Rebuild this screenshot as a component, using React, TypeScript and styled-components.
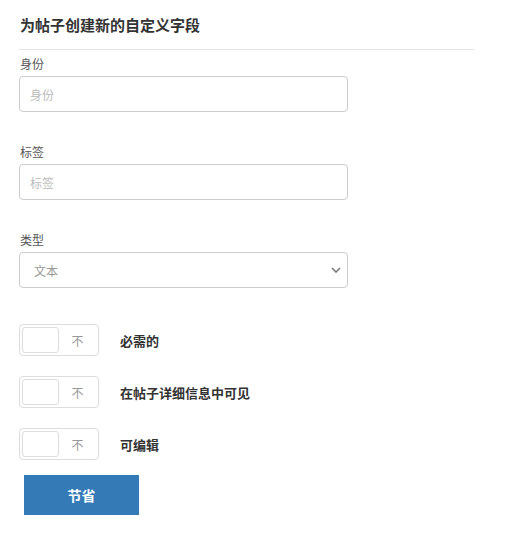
import React, { useState } from 'react';
import styled, { createGlobalStyle } from 'styled-components';

const GlobalStyle = createGlobalStyle`
  body {
    margin: 0;
    background: #fff;
    font-family: "Noto Sans CJK SC", "Noto Sans", "Liberation Sans", sans-serif;
    color: #333;
  }
`;

const Page = styled.div`
  width: 455px;
  padding: 15px 0 20px 19px;
`;

const Title = styled.h4`
  margin: 0;
  padding: 0 0 14px 1px;
  font-size: 15px;
  line-height: 20px;
  font-weight: bold;
  color: #333;
  border-bottom: 1px solid #e5e5e5;
`;

const Field = styled.div<{ first?: boolean }>`
  display: flex;
  flex-direction: column;
  margin-top: ${props => (props.first ? '6px' : '32px')};
`;

const Label = styled.label`
  font-size: 12px;
  line-height: 16px;
  color: #555;
  margin-bottom: 4px;
  padding-left: 1px;
`;

const Input = styled.input`
  box-sizing: border-box;
  width: 329px;
  height: 36px;
  padding: 0 10px;
  border: 1px solid #ccc;
  border-radius: 4px;
  font-family: inherit;
  font-size: 12px;
  color: #555;
  outline: none;

  &::placeholder {
    color: #bbb;
  }
`;

const SelectWrap = styled.div`
  position: relative;
  width: 329px;
`;

const Select = styled.select`
  box-sizing: border-box;
  width: 100%;
  height: 36px;
  padding: 0 14px;
  border: 1px solid #ccc;
  border-radius: 4px;
  background: #fff;
  font-family: inherit;
  font-size: 12px;
  color: #999;
  appearance: none;
  outline: none;
`;

const Chevron = styled.svg`
  position: absolute;
  right: 7px;
  top: 15px;
  pointer-events: none;
`;

const Toggles = styled.div`
  display: flex;
  flex-direction: column;
  gap: 20px;
  margin-top: 36px;
`;

const ToggleRow = styled.div`
  display: flex;
  align-items: center;
  gap: 21px;
`;

const Switch = styled.button`
  box-sizing: border-box;
  display: flex;
  align-items: center;
  width: 80px;
  height: 32px;
  padding: 2px;
  border: 1px solid #ddd;
  border-radius: 4px;
  background: #fff;
  cursor: pointer;
`;

const Knob = styled.span`
  box-sizing: border-box;
  width: 37px;
  height: 26px;
  border: 1px solid #ddd;
  border-radius: 3px;
  background: #fff;
`;

const SwitchText = styled.span`
  flex: 1;
  text-align: center;
  font-family: "Noto Sans CJK SC", sans-serif;
  font-size: 12px;
  color: #999;
`;

const ToggleLabel = styled.span`
  font-size: 13px;
  font-weight: bold;
  color: #333;
`;

const SaveButton = styled.button`
  margin: 15px 0 0 5px;
  width: 115px;
  height: 40px;
  border: none;
  background: #337ab7;
  color: #fff;
  font-family: inherit;
  font-size: 14px;
  font-weight: bold;
  cursor: pointer;
`;

const toggleItems = ['必需的', '在帖子详细信息中可见', '可编辑'];

const App: React.FC = () => {
  const [type, setType] = useState('text');

  return (
    <Page>
      <GlobalStyle />
      <Title>为帖子创建新的自定义字段</Title>

      <Field first>
        <Label>身份</Label>
        <Input type="text" placeholder="身份" />
      </Field>

      <Field>
        <Label>标签</Label>
        <Input type="text" placeholder="标签" />
      </Field>

      <Field>
        <Label>类型</Label>
        <SelectWrap>
          <Select value={type} onChange={e => setType(e.target.value)}>
            <option value="text">文本</option>
            <option value="number">数字</option>
          </Select>
          <Chevron width="10" height="6" viewBox="0 0 10 6">
            <path d="M1 1 L5 5 L9 1" fill="none" stroke="#777" strokeWidth="1.6" />
          </Chevron>
        </SelectWrap>
      </Field>

      <Toggles>
        {toggleItems.map(item => (
          <ToggleRow key={item}>
            <Switch type="button">
              <Knob />
              <SwitchText>不</SwitchText>
            </Switch>
            <ToggleLabel>{item}</ToggleLabel>
          </ToggleRow>
        ))}
      </Toggles>

      <SaveButton type="button">节省</SaveButton>
    </Page>
  );
};

export default App;
